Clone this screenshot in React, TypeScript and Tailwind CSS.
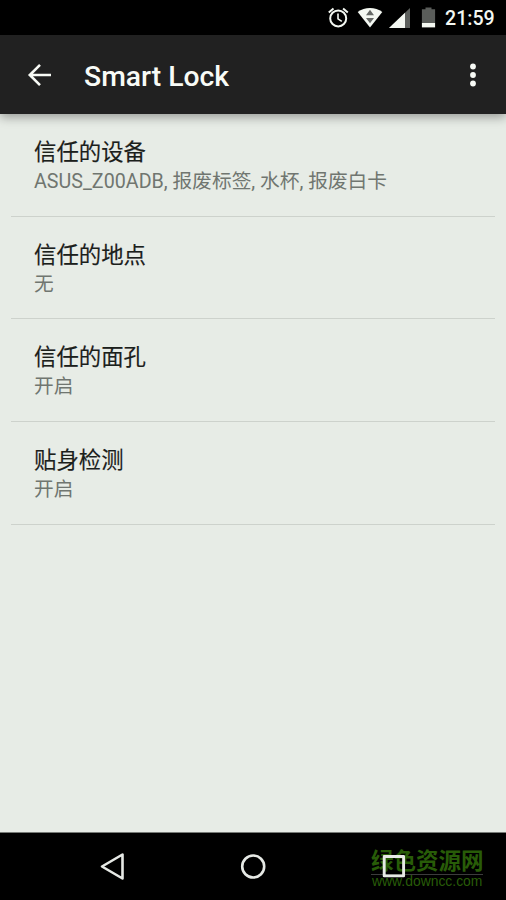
interface Preference {
  title: string
  summary: string
}

const preferences: Preference[] = [
  { title: '信任的设备', summary: 'ASUS_Z00ADB, 报废标签, 水杯, 报废白卡' },
  { title: '信任的地点', summary: '无' },
  { title: '信任的面孔', summary: '开启' },
  { title: '贴身检测', summary: '开启' },
]

function StatusBar() {
  return (
    <div className="flex h-[35px] shrink-0 items-center justify-end bg-black pr-[11px] text-[#f4f8f2]">
      <svg width="118" height="35" viewBox="0 0 118 35" fill="none" className="mr-[9px]">
        {/* alarm */}
        <circle cx="20.2" cy="18.4" r="8" stroke="currentColor" strokeWidth="2" />
        <path d="M20 13.6v5.2l3.8 2.5" stroke="currentColor" strokeWidth="1.6" />
        <path d="M10.8 12.4l4.7-3.9M29.8 12.4l-4.7-3.9" stroke="currentColor" strokeWidth="2" />
        {/* wifi */}
        <path d="M39.7 12.1C46.6 6.6 57.4 6.6 64.3 12.1L52 27.6z" fill="currentColor" />
        <path d="M52 9.8l4 5.4h-8zM48 18h8l-4 5.2z" fill="#666966" />
        {/* signal */}
        <path d="M92 8v20H71z" fill="#5d605d" />
        <path d="M87 12.8V28H71z" fill="currentColor" />
        {/* battery */}
        <path d="M107.5 7.4h6v1.8h3.6v13.8h-13.2V9.2h3.6z" fill="#5a5d5a" />
        <path d="M103.9 23h13.2v4.4h-13.2z" fill="currentColor" />
      </svg>
      <span className="w-[50px] whitespace-nowrap pt-[2px] font-[Roboto] text-[19.6px] font-medium leading-none">21:59</span>
    </div>
  )
}

function AppBar() {
  return (
    <header className="relative z-10 flex h-[79px] shrink-0 items-center bg-[#212121] text-[#f8fbf6] shadow-[0_3px_10px_rgba(0,0,0,0.36)]">
      <svg width="24" height="24" viewBox="0 0 24 24" fill="none" stroke="currentColor" strokeWidth="2.6" className="ml-[27px]">
        <path d="M24 12H3M13 1.8L2.8 12L13 22.2" />
      </svg>
      <h1 className="ml-[33px] pt-[6px] font-[Roboto] text-[28.3px] font-medium leading-none">Smart Lock</h1>
      <svg width="8" height="26" viewBox="0 0 8 26" fill="currentColor" className="ml-auto mr-[29.5px]">
        <circle cx="4" cy="4.5" r="2.9" />
        <circle cx="4" cy="13" r="2.9" />
        <circle cx="4" cy="21.5" r="2.9" />
      </svg>
    </header>
  )
}

function PreferenceRow({ title, summary }: Preference) {
  return (
    <li className="h-[102.7px] border-b border-[#cdd2cc] pl-[23px] pt-[23px]">
      <div className="text-[22.4px] leading-[30px] text-[#1b201b] [-webkit-text-stroke:0.15px_#1b201b]">{title}</div>
      <div className="whitespace-nowrap text-[19.7px] leading-[30px] text-[#707670]">{summary}</div>
    </li>
  )
}

function NavigationBar() {
  return (
    <nav className="relative flex h-[68px] shrink-0 items-center border-t border-[#777b77] bg-black text-[#e6e9e5]">
      <div className="absolute left-[371px] top-[15px] w-[112px] whitespace-nowrap text-[#285c08]">
        <div className="border-b border-[#3c3c3c] text-[22.5px] font-bold leading-[26px]">绿色资源网</div>
        <div className="pl-px font-['Liberation_Sans'] text-[13.9px] leading-[13px]">www.downcc.com</div>
      </div>
      <svg width="506" height="67" viewBox="0 0 506 67" fill="none" stroke="currentColor" strokeWidth="2.6" strokeLinejoin="round" className="relative">
        <path d="M122.5 21.5v24L102 33.5z" />
        <circle cx="253.200" cy="33.500" r="11" />
        <rect x="384.200" y="23.500" width="19.400" height="19.400" strokeWidth="2.900" />
      </svg>
    </nav>
  )
}

export default function App() {
  return (
    <div className="flex h-[900px] w-[506px] flex-col overflow-hidden bg-[#e7ece6] font-[Roboto,'Noto_Sans_CJK_SC',sans-serif]">
      <StatusBar />
      <AppBar />
      <main className="flex-1 px-[11px]">
        <ul>
          {preferences.map((item) => (
            <PreferenceRow key={item.title} {...item} />
          ))}
        </ul>
      </main>
      <NavigationBar />
    </div>
  )
}
